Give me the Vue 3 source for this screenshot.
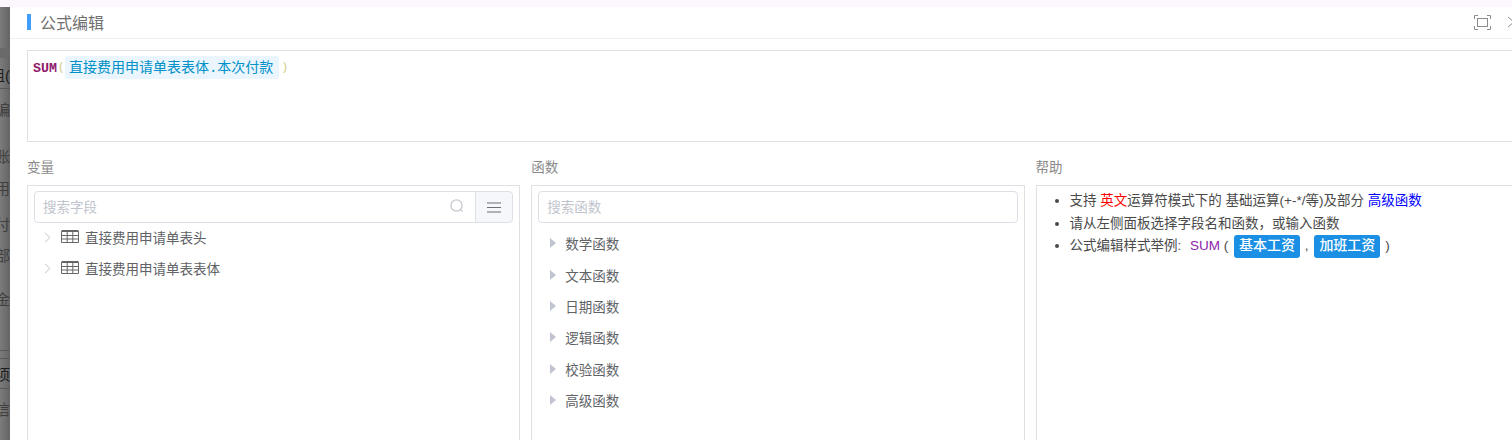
<script setup>
const stripRows = [
  { text: '组(', h: 34, cls: 'dark' },
  { text: '编', h: 47, cls: '' },
  { text: '账', h: 32, cls: '' },
  { text: '用', h: 36, cls: '' },
  { text: '付', h: 31, cls: '' },
  { text: '部', h: 44, cls: '' },
  { text: '金', h: 75, cls: '' },
  { text: '项', h: 35, cls: 'dark' },
  { text: '信', h: 30, cls: '' }
]
const funcs = ['数学函数', '文本函数', '日期函数', '逻辑函数', '校验函数', '高级函数']
const tables = ['直接费用申请单表头', '直接费用申请单表表体']
</script>

<template>
  <div class="page">
    <div class="topbar"></div>
    <div class="main">
      <div class="strip">
        <div v-for="r in stripRows" :key="r.text" class="strip-row" :class="r.cls" :style="{ height: r.h + 'px' }">
          <span>{{ r.text }}</span>
        </div>
      </div>
      <div class="modal">
        <div class="head">
          <span class="bar"></span>
          <span class="title">公式编辑</span>
          <svg class="fs" width="17" height="15" viewBox="0 0 17 15" fill="none" stroke="#8c8c8c" stroke-width="1">
            <path d="M.5 4V.5H4M13 .5h3.5V4M16.500 11v3.500H13M4 14.500H.5V11" />
            <rect x="3.5" y="3.5" width="10" height="8" />
          </svg>
          <svg class="close" width="8" height="12" viewBox="0 0 8 12" fill="none" stroke="#8c8c8c" stroke-width="1">
            <path d="M1 1l6 5M7 6l-6 5" />
          </svg>
        </div>
        <div class="editor">
          <span class="fn">SUM</span><span class="paren">(</span><span class="chip">直接费用申请单表表体.本次付款</span><span class="paren close-paren">)</span>
        </div>
        <div class="cols">
          <section class="col">
            <div class="col-title">变量</div>
            <div class="panel">
              <div class="search">
                <div class="search-input">
                  <span class="ph">搜索字段</span>
                  <svg width="16" height="16" viewBox="0 0 16 16" fill="none" stroke="#c5c8ce" stroke-width="1.3">
                    <circle cx="7.5" cy="7.5" r="5.6" />
                    <path d="M11.600 11.600l2 2" />
                  </svg>
                </div>
                <div class="search-btn">
                  <svg width="14" height="11" viewBox="0 0 14 11" stroke="#6b6f78" stroke-width="1.2">
                    <path d="M0 1h14M0 5.500h14M0 10h14" />
                  </svg>
                </div>
              </div>
              <div v-for="t in tables" :key="t" class="tree-row">
                <svg class="chev" width="7" height="11" viewBox="0 0 7 11" fill="none" stroke="#c0c4cc" stroke-width="1">
                  <path d="M1 .8l5 4.700-5 4.700" />
                </svg>
                <svg class="tbl" width="18" height="13" viewBox="0 0 18 13" fill="none" stroke="#666" stroke-width="1">
                  <path d="M.5 1.500h17v11H.5zM.5 5.500h17M.5 9h17M6.200 2v10.500M11.800 2v10.500" />
                  <path d="M.5 1h17" stroke-width="2" />
                </svg>
                <span>{{ t }}</span>
              </div>
            </div>
          </section>
          <section class="col">
            <div class="col-title">函数</div>
            <div class="panel">
              <div class="search-input solo"><span class="ph">搜索函数</span></div>
              <div class="fn-list">
                <div v-for="f in funcs" :key="f" class="fn-row">
                  <span class="tri"></span>
                  <span>{{ f }}</span>
                </div>
              </div>
            </div>
          </section>
          <section class="col help">
            <div class="col-title">帮助</div>
            <div class="panel help-panel">
              <ul>
                <li>支持 <span class="red">英文</span>运算符模式下的 基础运算(+-*/等)及部分 <span class="blue">高级函数</span></li>
                <li>请从左侧面板选择字段名和函数，或输入函数</li>
                <li>公式编辑样式举例: <span class="purple">SUM</span> ( <span class="tag">基本工资</span> , <span class="tag">加班工资</span> )</li>
              </ul>
            </div>
          </section>
        </div>
      </div>
    </div>
  </div>
</template>

<style scoped>
.page {
  width: 1512px;
  height: 440px;
  overflow: hidden;
  background: #fff;
  font-family: "Liberation Sans", "Noto Sans CJK SC", sans-serif;
  font-size: 13.5px;
  color: #606266;
}
.topbar { height: 7px; background: #fdf6fd; }
.main { display: flex; height: 433px; }
.strip {
  width: 10px;
  flex: none;
  overflow: hidden;
  background:
    linear-gradient(#5a5a5a, #5a5a5a) 0 81px / 100% 1px no-repeat,
    linear-gradient(#5a5a5a, #5a5a5a) 0 343px / 100% 1px no-repeat,
    linear-gradient(#5a5a5a, #5a5a5a) 0 351px / 100% 1px no-repeat,
    linear-gradient(#5a5a5a, #5a5a5a) 0 381px / 100% 1px no-repeat,
    linear-gradient(#6a6a6a, #6a6a6a) 0 41px / 100% 10px no-repeat,
    linear-gradient(90deg, #7c7c7c, #646464);
  padding-top: 59px;
  color: #3f3f3f;
}
.strip-row { display: flex; justify-content: flex-end; white-space: nowrap; font-size: 15px; line-height: 20px; }
.strip-row.dark { color: #1c1c1c; }
.modal { flex: 1; min-width: 0; overflow: hidden; }
.head {
  display: flex;
  align-items: center;
  border-bottom: 1px solid #efefef;
  padding: 0 0 1px 17px;
  box-sizing: border-box;
  height: 32px;
}
.bar { flex: none; width: 4px; height: 16px; background: #409eff; margin-right: 9px; }
.title { font-size: 16px; color: #6f6f6f; flex: 1; }
.fs { margin-right: 16px; }
.close { margin-right: -3px; }
.editor {
  margin: 11px 0 0 17px;
  width: 1500px;
  height: 92px;
  border: 1px solid #e0e0e0;
  box-sizing: border-box;
  padding: 5px 0 0 5px;
  font-family: "DejaVu Sans Mono", "Noto Sans CJK SC", monospace;
  font-size: 13px;
  line-height: 24px;
  color: #0091c7;
}
.fn { color: #8f1a6b; font-weight: 700; font-size: 13.3px; font-family: "Liberation Mono", monospace; }
.paren { color: #d6cf8f; display: inline-block; width: 8px; }
.close-paren { margin-left: 2px; }
.chip {
  display: inline-block;
  background: #eaf5fd;
  border-radius: 3px;
  padding: 0 6px 0 4px;
  height: 23px;
  line-height: 24px;
  font-family: "Liberation Mono", "Noto Sans CJK SC", monospace;
  font-size: 14px;
}
.cols { display: flex; margin: 16px 0 0 17px; gap: 11px; width: 1520px; }
.col { width: 493.300px; flex: none; }
.col.help { width: 500px; }
.col-title { height: 20px; line-height: 20px; color: #8a8a8a; font-size: 13.5px; margin-bottom: 7px; }
.panel {
  border: 1px solid #e0e0e3;
  height: 260px;
  box-sizing: border-box;
  padding: 5px 6px;
}
.search { display: flex; height: 32px; }
.search-input {
  flex: 1;
  display: flex;
  align-items: center;
  justify-content: space-between;
  border: 1px solid #dcdfe6;
  border-radius: 4px 0 0 4px;
  padding: 0 10px 2px 8px;
  box-sizing: border-box;
}
.search-input.solo { height: 32px; border-radius: 4px; }
.ph { color: #c0c4cc; font-size: 13.5px; }
.search-btn {
  width: 38px;
  display: flex;
  align-items: center;
  justify-content: center;
  background: #f5f7fa;
  border: 1px solid #dcdfe6;
  border-radius: 0 4px 4px 0;
  box-sizing: border-box;
  margin-left: -1px;
}
.tree-row {
  height: 31.300px;
  display: flex;
  align-items: center;
  padding: 0 0 4px 10px;
  box-sizing: border-box;
}
.tree-row span { margin-left: 6px; }
.chev { margin-top: 2px; }
.tbl { margin-left: 10px; margin-top: -1px; }
.fn-list { padding-top: 4.500px; }
.fn-row { height: 31.400px; display: flex; align-items: center; padding-left: 12px; }
.tri {
  width: 0;
  height: 0;
  border-left: 6px solid #c0c4d0;
  border-top: 5px solid transparent;
  border-bottom: 5px solid transparent;
  margin-right: 9px;
}
.help-panel { padding: 0; color: #4a4a4a; }
ul { margin: 0; padding: 4px 0 0 33px; }
li { line-height: 22.500px; }
.red { color: #f00; }
.blue { color: #00f; }
.purple { color: #8e24aa; margin-left: 5px; }
.tag {
  display: inline-block;
  background: #1a8fe3;
  color: #fff;
  border-radius: 3px;
  height: 23px;
  line-height: 21px;
  padding: 0 5px;
  margin: 0 1px 0 2px;
  font-weight: 500;
  font-size: 14px;
}
</style>
